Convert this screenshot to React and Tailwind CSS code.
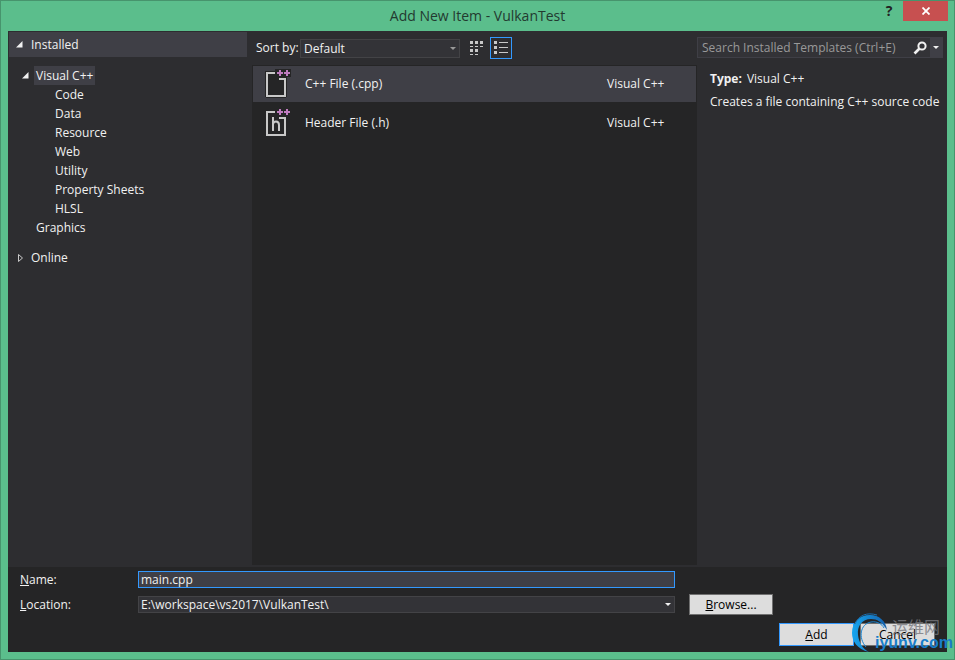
import React from "react";

const childItems = ["Code", "Data", "Resource", "Web", "Utility", "Property Sheets", "HLSL"];

function ExpandedArrow() {
  return (
    <svg width="7" height="7" viewBox="0 0 7 7" aria-hidden="true" className="shrink-0">
      <path d="M6.5 0V6.5H0Z" fill="#f1f1f1" />
    </svg>
  );
}

function DropArrow({ color }) {
  return (
    <svg width="6" height="3" viewBox="0 0 6 3" aria-hidden="true">
      <path d="M0 0H6L3 3Z" fill={color} />
    </svg>
  );
}

function FileIcon({ header }) {
  return (
    <svg width="28" height="30" viewBox="0 0 28 30" fill="none" aria-hidden="true" className="shrink-0">
      <path d="M1 2H11V0H27V8H23V28H22V29H2V28H1Z" fill="#252526" />
      <path d="M11 4H3V27H21V10H15" stroke="#c8c8c8" strokeWidth="2" />
      <path d="M13 4H19M16 1V7M20 4H26M23 1V7" stroke="#c07cc0" strokeWidth="2" />
      {header && (
        <path d="M9 9V23M9 16Q9.500 13.500 12 13.500Q15 13.500 15 17V23" stroke="#c8c8c8" strokeWidth="2" />
      )}
    </svg>
  );
}

function TitleBar() {
  return (
    <header className="grid h-[30px] grid-cols-[1fr_auto_1fr] items-start">
      <h1 className="col-start-2 pt-1 text-[14px] leading-[22px] text-[#233a30]">
        Add New Item - VulkanTest
      </h1>
      <div className="flex justify-end pr-[6px]">
        <button aria-label="Help" className="flex h-5 w-7 items-center justify-center text-[14px] font-bold text-[#222]">
          ?
        </button>
        <button aria-label="Close" className="flex h-5 w-[45px] items-center justify-center bg-[#c75050]">
          <svg width="8" height="8" viewBox="0 0 8 8" aria-hidden="true">
            <path d="M0.5 0.5L7.5 7.5M7.5 0.5L0.5 7.5" stroke="#fff" strokeWidth="1.8" />
          </svg>
        </button>
      </div>
    </header>
  );
}

function Sidebar() {
  return (
    <nav className="flex w-[244px] shrink-0 flex-col items-stretch pt-px pr-[5px] pl-px">
      <button className="flex h-[25px] items-center gap-2 bg-[#3f3f46] pl-[7px] text-left">
        <ExpandedArrow />
        Installed
      </button>
      <div className="mt-[9px] flex items-center gap-[5px] pl-[13px]">
        <ExpandedArrow />
        <button className="h-[19px] bg-[#3f3f46] px-[2px] leading-[19px]">Visual C++</button>
      </div>
      <ul className="pl-[46px]">
        {childItems.map((item) => (
          <li key={item}>
            <button className="block h-[19px] leading-[19px]">{item}</button>
          </li>
        ))}
      </ul>
      <button className="h-[19px] pl-[27px] text-left leading-[19px]">Graphics</button>
      <button className="mt-[11px] flex h-[19px] items-center gap-2 pl-[9px] leading-[19px]">
        <svg width="5" height="8" viewBox="0 0 5 8" fill="none" aria-hidden="true">
          <path d="M0.5 0.5V7.5L4.5 4Z" stroke="#c8c8c8" />
        </svg>
        Online
      </button>
    </nav>
  );
}

function Toolbar() {
  return (
    <div className="flex h-[34px] items-center pl-1">
      <label htmlFor="sort">Sort by:</label>
      <div className="relative ml-auto h-[19px] w-[160px]">
        <select
          id="sort"
          className="block h-full w-full appearance-none border border-[#434346] bg-[#333337] pl-[3px] leading-[17px] outline-none"
        >
          <option>Default</option>
        </select>
        <span className="pointer-events-none absolute top-2 right-1">
          <DropArrow color="#999" />
        </span>
      </div>
      <button aria-label="Small icons" className="ml-[6px] flex h-[22px] w-[22px] items-center justify-center">
        <svg width="14" height="14" viewBox="0 0 14 14" fill="#c8c8c8" aria-hidden="true">
          <path d="M0 0h3v3H0zM5 0h3v3H5zM10 0h3v3h-3zM0 5h3v1H0zM5 5h3v1H5zM10 5h3v1h-3zM0 8h3v3H0zM5 8h3v3H5zM0 13h3v1H0zM5 13h3v1H5z" />
        </svg>
      </button>
      <button
        aria-label="Details"
        className="mr-[185px] ml-[2px] flex h-[22px] w-[22px] items-center justify-center border border-[#3399ff]"
      >
        <svg width="14" height="14" viewBox="0 0 14 14" fill="#c8c8c8" aria-hidden="true">
          <path d="M0 0h3v3H0zM5 1h9v1H5zM0 5h3v3H0zM5 6h9v1H5zM0 10h3v3H0zM5 11h9v1H5z" />
        </svg>
      </button>
    </div>
  );
}

function Templates() {
  return (
    <main className="flex min-w-0 flex-1 flex-col">
      <Toolbar />
      <div className="mb-[2px] flex-1 bg-[#252526] p-px">
        <button className="flex h-9 w-full items-center bg-[#3f3f46] pl-[11px] text-left">
          <FileIcon />
          <span className="ml-[13px] flex-1">C++ File (.cpp)</span>
          <span className="w-[89px]">Visual C++</span>
        </button>
        <button className="mt-[3px] flex h-9 w-full items-center pl-[11px] text-left">
          <FileIcon header />
          <span className="ml-[13px] flex-1">Header File (.h)</span>
          <span className="w-[89px]">Visual C++</span>
        </button>
      </div>
    </main>
  );
}

function Details() {
  return (
    <aside className="w-[250px] shrink-0 pt-[6px] pr-1">
      <div className="flex h-[21px] items-stretch border border-[#3f3f46] bg-[#333337]">
        <input
          aria-label="Search Installed Templates"
          placeholder="Search Installed Templates (Ctrl+E)"
          className="min-w-0 flex-1 bg-transparent pl-1 outline-none placeholder:text-[#999999]"
        />
        <button aria-label="Search" className="flex w-5 items-center justify-center">
          <svg width="14" height="14" viewBox="0 0 14 14" fill="none" stroke="#f1f1f1" aria-hidden="true">
            <circle cx="9" cy="5" r="3.6" strokeWidth="2" />
            <path d="M6.5 7.5L1.500 12.500" strokeWidth="2.600" />
          </svg>
        </button>
        <button aria-label="Search options" className="flex w-3 items-center justify-center bg-[#3f3f46]">
          <DropArrow color="#f1f1f1" />
        </button>
      </div>
      <div className="pt-3 pl-[13px]">
        <p className="flex gap-[5px] leading-[18px]">
          <b>Type:</b>
          <span>Visual C++</span>
        </p>
        <p className="mt-[5px] whitespace-nowrap leading-[18px]">Creates a file containing C++ source code</p>
      </div>
    </aside>
  );
}

function Watermark() {
  return (
    <div aria-hidden="true" className="pointer-events-none absolute right-[5px] bottom-1 h-12 w-[98px]">
      <svg width="98" height="48" viewBox="0 0 98 48" fill="none" className="absolute inset-0">
        <defs>
          <linearGradient id="ring" x1="0" y1="0" x2="1" y2="0">
            <stop offset="0" stopColor="#16a5ee" />
            <stop offset="1" stopColor="#1560ac" />
          </linearGradient>
        </defs>
        <path d="M18 45C6 42 1 34 1 26C1 15 9 8 19 8C28 8 35 14 36 23C31 15 26 12 20 12C11 12 6 19 7 28C8 36 12 42 18 45Z" fill="url(#ring)" />
        <path d="M15 40C7 31 9 17 20 15C26 14 31 17 33 21" stroke="#1a86d4" />
        <path d="M4 17C8 8 16 5 26 8" stroke="#1c6fb0" />
      </svg>
      <span className="absolute top-[10px] left-[41px] font-['Noto_Sans_CJK_SC',sans-serif] text-[16px] leading-[18px] whitespace-nowrap text-[#77777d] opacity-80">
        运维网
      </span>
      <span className="absolute top-[26px] left-6 font-['Liberation_Sans',sans-serif] text-[16px] leading-[20px] font-bold text-[#187dca]">
        iyunv.com
      </span>
    </div>
  );
}

function Footer() {
  return (
    <footer className="bg-[#252526] px-3 pt-1 pb-[6px]">
      <div className="mr-[162px] grid grid-cols-[118px_minmax(0,1fr)_98px] items-center gap-y-[6px]">
        <label htmlFor="name" className="leading-[17px]"><u>N</u>ame:</label>
        <input
          id="name"
          defaultValue="main.cpp"
          className="h-[17px] border border-[#3399ff] bg-[#3f3f46] pl-[2px] leading-[15px] outline-none"
        />
        <span />
        <label htmlFor="location" className="leading-[17px]"><u>L</u>ocation:</label>
        <div className="relative h-[17px]">
          <select
            id="location"
            className="block h-full w-full appearance-none border border-[#434346] bg-[#333337] pl-[2px] leading-[15px] outline-none"
          >
            <option>E:\workspace\vs2017\VulkanTest\</option>
          </select>
          <span className="pointer-events-none absolute top-[7px] right-1">
            <DropArrow color="#f1f1f1" />
          </span>
        </div>
        <button className="ml-[14px] h-[21px] border border-[#707070] bg-[#dddddd] text-black"><u>B</u>rowse...</button>
      </div>
      <div className="mt-2 flex justify-end gap-[6px]">
        <button className="h-[23px] w-[75px] border border-[#3399ff] bg-[#dddddd] text-black"><u>A</u>dd</button>
        <button className="h-[23px] w-[75px] border border-[#707070] bg-[#dddddd] text-black">Cancel</button>
      </div>
    </footer>
  );
}

export default function App() {
  return (
    <div className="relative flex min-h-screen flex-col border border-[#47946d] bg-[#5bbe8c] font-['Open_Sans','Noto_Sans',sans-serif] text-[12px] leading-4 text-[#f1f1f1]">
      <TitleBar />
      <div className="mx-[7px] mb-[7px] flex flex-1 flex-col bg-[#2d2d30]">
        <div className="flex flex-1">
          <Sidebar />
          <Templates />
          <Details />
        </div>
        <Footer />
      </div>
      <Watermark />
    </div>
  );
}
